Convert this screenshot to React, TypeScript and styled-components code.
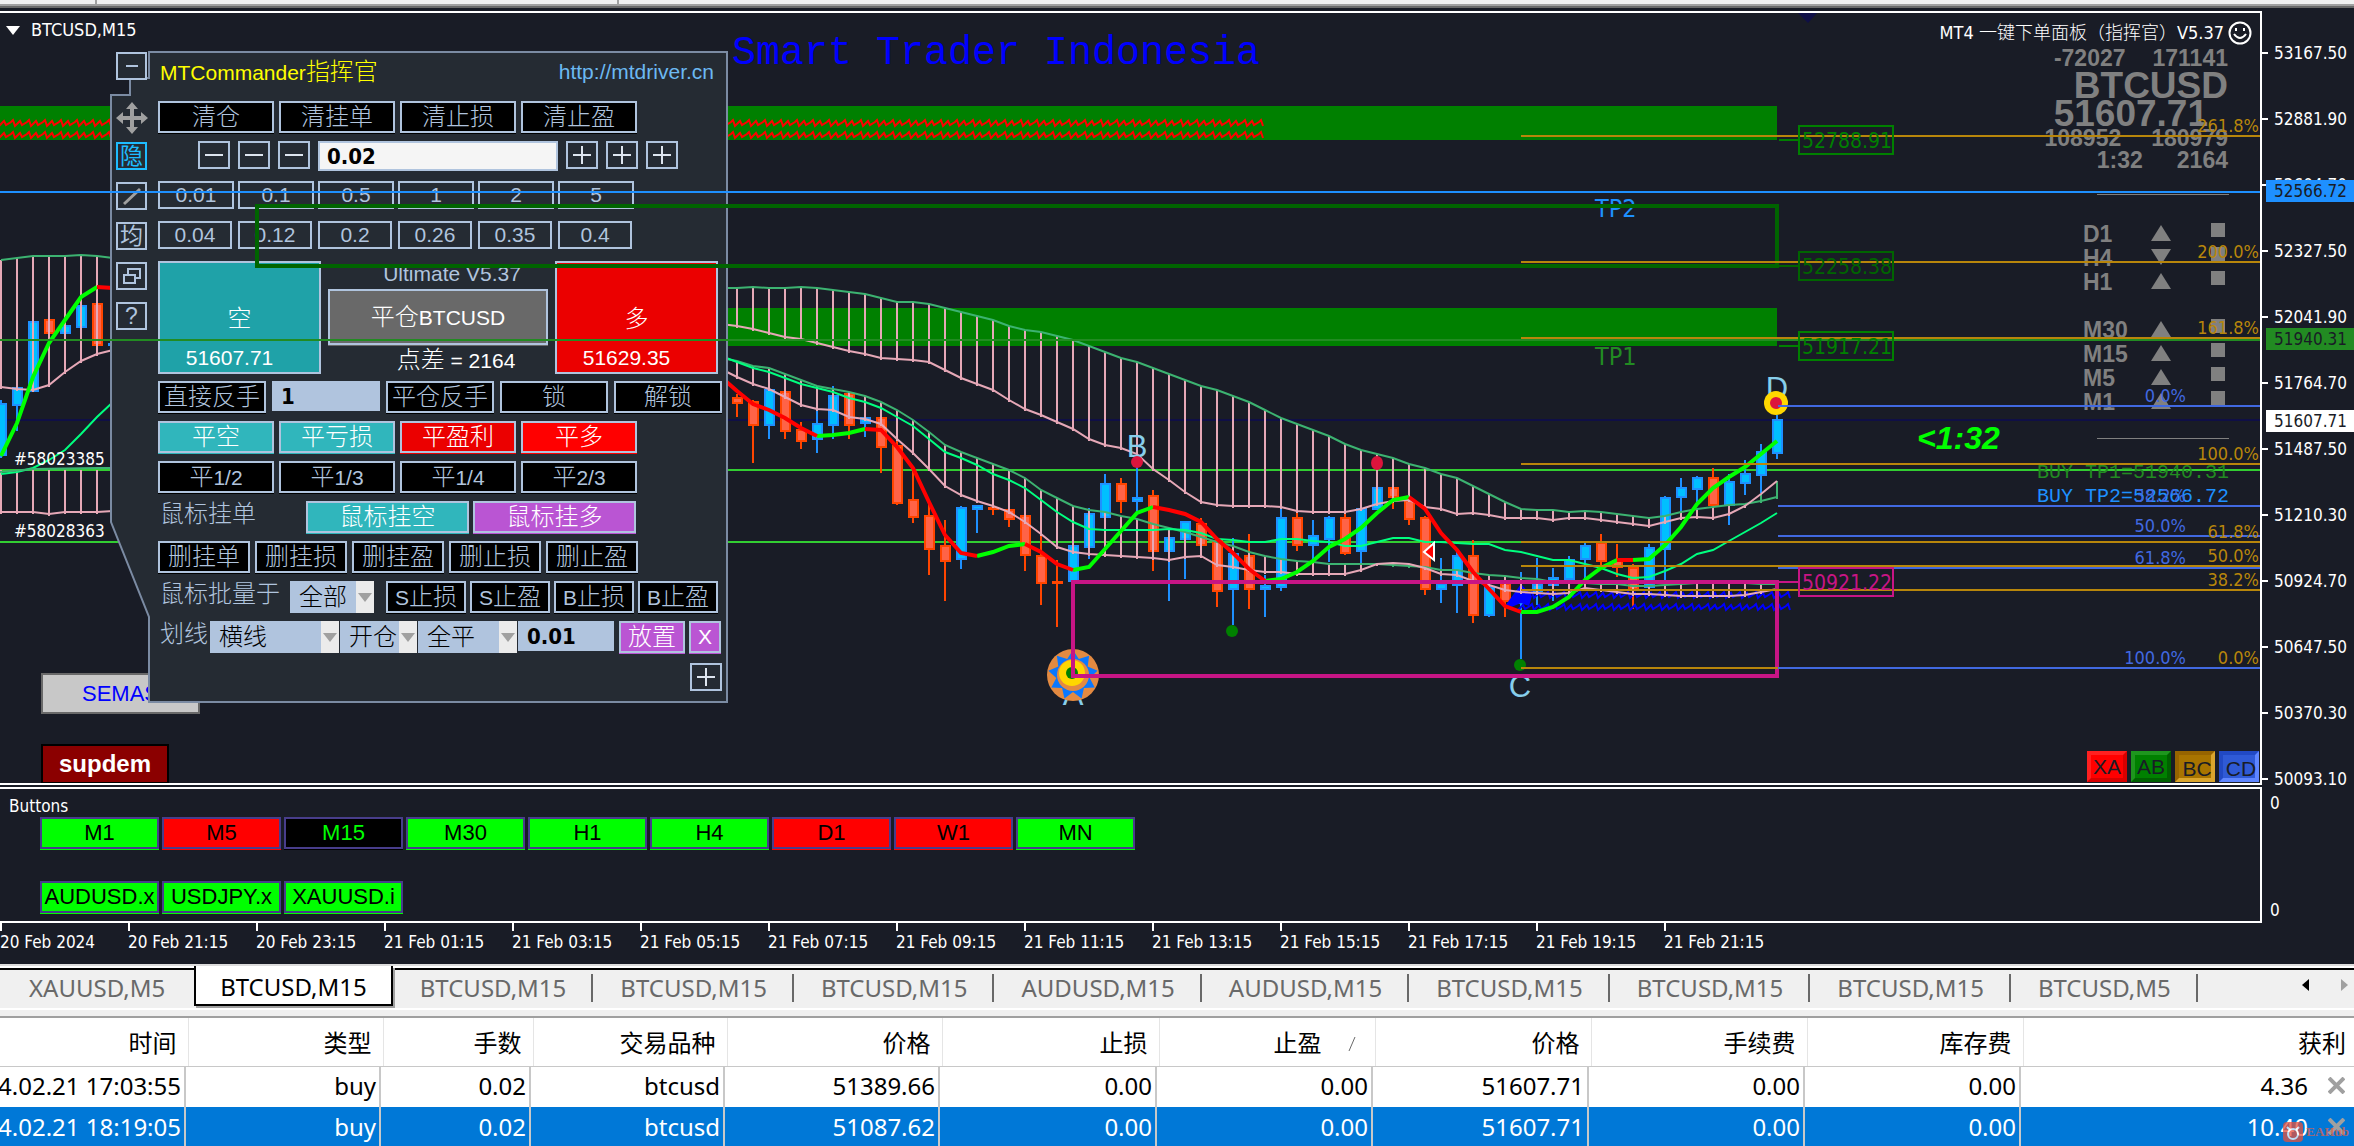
import React from 'react';
import styled, { createGlobalStyle, css } from 'styled-components';

const UI = `"DejaVu Sans Condensed", "Noto Sans", "Noto Sans CJK SC", sans-serif`;
const ARIAL = `"Liberation Sans", "Noto Sans CJK SC", sans-serif`;
const SEGOE = `"Noto Sans", "Noto Sans CJK SC", sans-serif`;
const MONO = `"Liberation Mono", monospace`;
const INK = '#191c26';
const STEEL = '#b0c4de';
const PANEL = '#252b33';
const TEAL = '#30b6bc';
const ORCHID = '#ba55d3';

const GlobalStyle = createGlobalStyle`
  * { box-sizing: border-box; }
  body { margin: 0; background: ${INK}; overflow: hidden; }
  button, input, select { font: inherit; color: inherit; margin: 0; padding: 0; border-radius: 0; outline: none; }
`;

/* ---------- page ---------- */

const Page = styled.div`
  height: 100vh;
  display: grid;
  grid-template-rows: 8px minmax(0, 1fr) auto auto;
  font-family: ${UI};
  color: #fff;
`;

const TopStrip = styled.div`
  display: flex;
  background: #f0f0f0;
  border-bottom: 2px solid #696969;
  box-shadow: inset 0 -2px #a0a0a0;
`;
const StripPart = styled.span<{ $w: number }>`
  width: ${(p) => p.$w}px;
  height: 4px;
  border-right: 2px solid #a0a0a0;
`;

const Terminal = styled.main`
  display: grid;
  grid-template-columns: minmax(0, 1fr) 92px;
  grid-template-rows: minmax(0, 1fr) 136px 39px;
  row-gap: 2px;
  padding-top: 3px;
  background: ${INK};
`;

const Plot = styled.section`
  position: relative;
  overflow: hidden;
  border: solid #fff;
  border-width: 2px 2px 2px 0;
`;

const Layer = styled.svg`
  position: absolute;
  inset: 0;
  width: 100%;
  height: 100%;
  pointer-events: none;
  overflow: hidden;
`;

/* ---------- price axis ---------- */

const Axis = styled.aside`
  position: relative;
  font-size: 17px;
`;
const AxisList = styled.ul`
  margin: 0;
  padding: 9px 0 0;
  list-style: none;
`;
const AxisItem = styled.li`
  height: 66px;
  display: flex;
  align-items: center;
  gap: 6px;
  &::before { content: ''; width: 6px; height: 2px; background: #fff; }
`;
const PriceTag = styled.div<{ $top: number; $bg: string }>`
  position: absolute;
  left: 4px;
  right: 0;
  top: ${(p) => p.$top}px;
  height: 22px;
  line-height: 22px;
  padding-left: 8px;
  color: ${INK};
  background: ${(p) => p.$bg};
`;
const SubAxis = styled.aside`
  display: flex;
  flex-direction: column;
  justify-content: space-between;
  padding: 5px 8px 2px;
  font-size: 17px;
  line-height: 22px;
`;

/* ---------- objects placed on the chart ---------- */

const ChartTitle = styled.div`
  position: absolute;
  left: 6px;
  top: 5px;
  display: flex;
  align-items: center;
  gap: 11px;
  font-size: 18px;
  line-height: 24px;
`;
const ExpertName = styled.div`
  position: absolute;
  right: 8px;
  top: 8px;
  display: flex;
  align-items: center;
  gap: 4px;
  font: 300 18px/24px "DejaVu Sans Condensed", "Noto Sans CJK SC", sans-serif;
`;
const Readout = styled.div`
  position: absolute;
  right: 31px;
  top: 31px;
  width: 185px;
  display: flex;
  flex-direction: column;
  align-items: flex-end;
  padding-right: 1px;
  color: #808080;
  font: bold 23px/24px ${ARIAL};
`;
const ReadRow = styled.div<{ $gap: number; $lh: number }>`
  display: flex;
  gap: ${(p) => p.$gap}px;
  line-height: ${(p) => p.$lh}px;
`;
const BigRead = styled.div<{ $inset?: boolean }>`
  font-size: 37px;
  line-height: 28px;
  padding-right: ${(p) => (p.$inset ? 20 : 0)}px;
`;
const Trend = styled.div`
  position: absolute;
  right: 31px;
  top: 181px;
  width: 132px;
  height: 245px;
  border: solid #808080;
  border-width: 1px 0;
`;
const TrendTable = styled.ul`
  list-style: none;
  margin: 27px 0 0 -14px;
  padding: 0;
  color: #808080;
  font: bold 23px/24px ${ARIAL};
`;
const TrendRow = styled.li<{ $spaced?: boolean }>`
  display: grid;
  grid-template-columns: 68px 60px 14px;
  height: 24px;
  margin-top: ${(p) => (p.$spaced ? 24 : 0)}px;
  svg { margin-top: 3px; }
`;
const Square = styled.i`
  width: 14px;
  height: 14px;
  margin-top: 1px;
  background: #808080;
`;

const SemaButton = styled.button`
  position: absolute;
  left: 41px;
  top: 660px;
  width: 159px;
  height: 41px;
  background: #c8c8c8;
  border: 2px solid #696969;
  color: #00f;
  font: 22px ${ARIAL};
`;
const SupdemButton = styled.button`
  position: absolute;
  left: 41px;
  top: 731px;
  width: 128px;
  height: 40px;
  background: #8b0000;
  border: 2px solid #000;
  color: #fff;
  font: bold 24px ${ARIAL};
`;

const LegButtons = styled.div`
  position: absolute;
  right: 1px;
  bottom: 1px;
  display: flex;
  gap: 4px;
`;
const LegButton = styled.button<{ $bg: string; $lt: string; $dk: string; $down?: boolean }>`
  width: 40px;
  height: 31px;
  border: 4px solid;
  border-color: ${(p) => `${p.$lt} ${p.$dk} ${p.$dk} ${p.$lt}`};
  background: ${(p) => p.$bg};
  color: ${INK};
  font: 21px/23px ${ARIAL};
  display: flex;
  justify-content: center;
  padding: ${(p) => (p.$down ? '2px 0 0 4px' : '0')};
`;

/* ---------- trade panel ---------- */

const Panel = styled.div`
  position: absolute;
  left: 110px;
  top: 38px;
  width: 618px;
  height: 653px;
  display: grid;
  grid-template-columns: 48px 1fr;
  color: ${STEEL};
  font: 21px/24px ${ARIAL};
`;
const PanelShape = styled.svg`
  position: absolute;
  inset: 0;
`;
const Tools = styled.div`
  position: relative;
  display: flex;
  flex-direction: column;
  align-items: flex-start;
  gap: 12px;
  padding: 1px 0 0 6px;
`;
const Tool = styled.button<{ $bare?: boolean; $hot?: boolean }>`
  width: 31px;
  height: 28px;
  display: grid;
  place-items: center;
  background: ${PANEL};
  border: 2px solid ${STEEL};
  font-size: 23px;
  line-height: 22px;
  ${(p) => p.$hot && css`border-color: #1ebcff; color: #1ebcff;`}
  ${(p) => p.$bare && css`margin-top: 10px; border: 0; background: none;`}
`;
const Body = styled.div`
  position: relative;
  display: flex;
  flex-direction: column;
  gap: 8px;
  padding: 9px 6px 0 0;
`;
const Head = styled.div`
  display: flex;
  justify-content: space-between;
  height: 33px;
  padding: 0 8px 0 2px;
  color: #ff0;
  a { color: #6cb9f2; text-decoration: none; }
`;
const Row = styled.div<{ $gap?: number; $pad?: number }>`
  display: flex;
  align-items: flex-start;
  gap: ${(p) => p.$gap ?? 5}px;
  height: 32px;
  padding-left: ${(p) => p.$pad ?? 0}px;
`;
const LastRow = styled(Row)`
  justify-content: flex-end;
  padding-top: 2px;
`;
const Btn = styled.button<{ $w: number; $bg?: string; $fg?: string; $low?: boolean }>`
  width: ${(p) => p.$w}px;
  height: ${(p) => (p.$low ? 28 : 32)}px;
  flex: none;
  display: flex;
  align-items: center;
  justify-content: center;
  white-space: nowrap;
  border: 2px solid ${STEEL};
  background: ${(p) => p.$bg ?? '#000'};
  color: ${(p) => p.$fg ?? STEEL};
  box-shadow: 0 1px ${(p) => p.$bg ?? '#000'};
`;
const Han = styled.span`
  font-size: 24px;
  font-weight: 300;
  line-height: 24px;
`;
const Field = styled.input<{ $w: number; $bg?: string }>`
  width: ${(p) => p.$w}px;
  height: 30px;
  flex: none;
  border: 2px solid ${STEEL};
  background: ${(p) => p.$bg ?? STEEL};
  color: #000;
  padding-left: 7px;
  font: bold 22px "DejaVu Sans Condensed", sans-serif;
`;
const RowLabel = styled.span<{ $w: number }>`
  width: ${(p) => p.$w}px;
  flex: none;
  padding-left: 2px;
  font-size: 24px;
  font-weight: 300;
  line-height: 26px;
  white-space: nowrap;
`;
const Pick = styled.span<{ $w: number }>`
  position: relative;
  width: ${(p) => p.$w}px;
  height: 32px;
  flex: none;
  background: ${STEEL};
  color: #000;
  select {
    appearance: none;
    width: 100%;
    height: 32px;
    padding-left: 9px;
    border: 0;
    background: none;
    font-size: 24px;
    font-weight: 300;
  }
  svg { position: absolute; right: 0; top: 0; pointer-events: none; }
`;
const Quotes = styled.div`
  display: grid;
  grid-template-columns: 163px 220px 163px;
  justify-content: space-between;
  height: 112px;
  padding-right: 4px;
`;
const Quote = styled.button<{ $bg: string }>`
  display: flex;
  flex-direction: column;
  align-items: center;
  justify-content: flex-end;
  gap: 15px;
  padding-bottom: 2px;
  border: 2px solid ${STEEL};
  background: ${(p) => p.$bg};
  color: #fff;
  line-height: 24px;
  span:last-child { padding-right: 20px; }
`;
const Middle = styled.div`
  display: flex;
  flex-direction: column;
  align-items: center;
  color: #fff;
  button { height: 56px; margin: 2px 0 3px; }
`;
const Note = styled.span<{ $dim?: boolean }>`
  padding-left: ${(p) => (p.$dim ? 28 : 36)}px;
  color: ${(p) => (p.$dim ? STEEL : '#fff')};
  line-height: 26px;
`;

/* ---------- button window and dates ---------- */

const SubWindow = styled.section`
  border: solid #fff;
  border-width: 2px 2px 2px 0;
  padding: 6px 0 0 9px;
  font-size: 17px;
  line-height: 22px;
`;
const KeyRow = styled.div`
  display: flex;
  gap: 3px;
  margin: 0 0 32px 31px;
`;
const Key = styled.button<{ $bg: string }>`
  width: 119px;
  height: 32px;
  border: 2px solid #483d8b;
  box-shadow: 0 1px ${(p) => p.$bg};
  background: ${(p) => p.$bg};
  color: ${(p) => (p.$bg === '#000' ? '#0f0' : '#000')};
  font: 22px ${ARIAL};
  white-space: nowrap;
`;
const Dates = styled.ol`
  grid-column: 1 / -1;
  display: flex;
  list-style: none;
  margin: -2px 0 0;
  padding: 0;
  overflow: hidden;
  font-size: 17px;
  line-height: 22px;
`;
const DateMark = styled.li`
  width: 128px;
  flex: none;
  white-space: nowrap;
  &::before { content: ''; display: block; width: 2px; height: 8px; background: #fff; }
`;

/* ---------- chart tabs ---------- */

const TabBar = styled.nav`
  display: flex;
  height: 54px;
  border: solid;
  border-width: 2px 0;
  border-color: #dcdcdc transparent #a0a0a0;
  background: linear-gradient(#fff 2px, #000 2px 4px, #f0f0f0 4px 42px, #fff 42px 44px, #f0f0f0 44px) padding-box;
  color: #696969;
  font: 24px/36px ${SEGOE};
`;
const Tab = styled.button<{ $on?: boolean; $first?: boolean }>`
  position: relative;
  height: 40px;
  padding: 0 ${(p) => (p.$first ? 29 : 27)}px;
  margin-top: 2px;
  border: 0;
  background: none;
  ${(p) => !p.$on && css`
    &::after { content: ''; position: absolute; right: 0; top: 6px; width: 2px; height: 28px; background: ${p.$first ? 'transparent' : '#696969'}; }
  `}
  ${(p) => p.$on && css`
    margin-top: 0;
    padding: 3px 24px 0;
    background: #fff;
    color: #000;
    border: solid #000;
    border-width: 0 2px 2px;
    box-shadow: 2px 2px #a0a0a0;
  `}
`;
const TabScroll = styled.div`
  margin-left: auto;
  display: flex;
  align-items: center;
  gap: 32px;
  padding: 0 6px 12px 0;
  button { border: 0; background: none; line-height: 0; }
`;

/* ---------- order table ---------- */

const Orders = styled.section`
  position: relative;
  height: 128px;
  overflow: hidden;
  background: #fff;
  color: #000;
  font: 24px/30px ${SEGOE};
`;
const Table = styled.table`
  width: 100%;
  table-layout: fixed;
  border-collapse: collapse;
  th, td { text-align: right; white-space: nowrap; }
  th {
    height: 48px;
    padding: 0 11px 0 0;
    font-weight: 400;
    border-right: 1px solid #e5e5e5;
    border-bottom: 1px solid #c8c8c8;
    font-family: "Noto Sans CJK SC", sans-serif;
  }
  td {
    height: 41px;
    padding: 0 7px 2px 0;
    background: linear-gradient(#c8c8c8, #c8c8c8) right 2px top / 2px 100% no-repeat;
  }
  th:last-child { border-right: 0; padding-right: 8px; }
  td:last-child { background: none; padding-right: 9px; }
`;
const OrderRow = styled.tr<{ $on?: boolean }>`
  ${(p) => p.$on && css`background: #0078d7; color: #fff;`}
`;
const Stamp = styled.span`
  float: right;
`;
const Gain = styled.span`
  display: flex;
  align-items: center;
  justify-content: flex-end;
  gap: 20px;
  button { border: 0; background: none; line-height: 0; }
`;
const SortMark = styled.span`
  display: inline-block;
  width: 42px;
  padding-right: 8px;
`;
const Watermark = styled.div`
  position: absolute;
  right: 5px;
  bottom: 4px;
  display: flex;
  align-items: center;
  gap: 3px;
  color: #e0604a;
  opacity: 0.75;
  font: bold 13px/20px "Liberation Serif", serif;
`;

/* ---------- chart data ---------- */

type Candle = [0 | 1, number, number, number, number];
const X0 = 737;
const STEP = 16;

// direction, high, body top, body bottom, low
const candles: Candle[] = [
  [0, 394, 397, 404, 417], [0, 400, 401, 426, 463], [1, 389, 389, 426, 439], [0, 391, 391, 432, 439],
  [0, 422, 429, 442, 449], [1, 411, 423, 440, 453], [1, 386, 395, 426, 439], [0, 392, 393, 426, 439],
  [1, 415, 417, 424, 437], [0, 415, 417, 448, 473], [0, 441, 445, 504, 505], [0, 468, 499, 518, 523],
  [0, 503, 515, 550, 575], [0, 520, 545, 562, 601], [1, 506, 507, 560, 569], [1, 505, 505, 510, 533],
  [0, 506, 507, 510, 515], [0, 509, 509, 520, 527], [0, 514, 515, 556, 571], [0, 535, 555, 584, 605],
  [0, 560, 581, 584, 627], [1, 543, 545, 582, 582], [1, 508, 513, 548, 559], [1, 474, 483, 518, 518],
  [0, 478, 483, 502, 513], [1, 467, 497, 502, 512], [0, 490, 495, 552, 571], [1, 530, 537, 552, 601],
  [1, 521, 521, 540, 579], [0, 518, 523, 546, 546], [0, 538, 540, 592, 607], [1, 538, 553, 590, 625],
  [0, 534, 555, 590, 609], [1, 575, 585, 590, 617], [1, 507, 517, 588, 591], [0, 513, 517, 546, 551],
  [1, 520, 535, 546, 561], [1, 516, 517, 540, 562], [0, 514, 517, 554, 555], [1, 507, 508, 552, 563],
  [1, 487, 487, 510, 510], [0, 487, 487, 498, 509], [0, 495, 500, 520, 525], [0, 516, 517, 590, 595],
  [1, 558, 583, 590, 603], [1, 550, 555, 586, 613], [0, 540, 555, 616, 623], [1, 585, 586, 616, 617],
  [0, 582, 583, 602, 617], [1, 572, 590, 604, 659], [1, 558, 584, 592, 605], [1, 568, 577, 586, 601],
  [1, 556, 559, 580, 580], [1, 543, 545, 560, 580], [0, 534, 542, 562, 565], [0, 544, 560, 568, 577],
  [0, 564, 567, 590, 609], [1, 544, 547, 588, 588], [1, 496, 497, 550, 590], [1, 478, 487, 498, 512],
  [1, 476, 477, 490, 505], [0, 468, 477, 506, 506], [1, 474, 481, 506, 525], [1, 460, 473, 484, 495],
  [1, 444, 451, 476, 493], [1, 415, 419, 454, 459],
];
const leftCandles: Candle[] = [
  [1, 400, 403, 456, 458], [1, 386, 387, 406, 431], [1, 321, 321, 392, 392], [0, 319, 319, 334, 334],
  [1, 325, 325, 334, 334], [1, 305, 305, 328, 328], [0, 303, 303, 346, 346], [1, 343, 343, 346, 346],
];

const upper = [288, 287, 288, 288, 287, 288, 290, 292, 294, 298, 302, 302, 304, 308, 312, 316, 320, 326, 330, 332, 336, 340, 346, 352, 358, 362, 368, 374, 380, 386, 390, 396, 402, 410, 418, 424, 430, 436, 444, 450, 454, 458, 464, 468, 474, 478, 486, 494, 502, 509, 510, 510, 512, 511, 512, 514, 516, 518, 516, 512, 509, 507, 505, 504, 501, 497];
const upperPink = [326, 329, 333, 337, 339, 343, 347, 351, 354, 358, 359, 360, 362, 370, 378, 384, 390, 400, 409, 415, 422, 429, 439, 445, 448, 454, 469, 480, 492, 502, 505, 506, 506, 506, 507, 511, 512, 512, 512, 509, 504, 501, 500, 507, 509, 514, 513, 515, 518, 518, 518, 520, 518, 518, 520, 522, 524, 526, 522, 518, 517, 518, 514, 506, 494, 481];
const lower = [361, 366, 368, 374, 380, 386, 389, 392, 396, 402, 410, 420, 432, 445, 452, 458, 464, 470, 478, 490, 498, 506, 510, 512, 516, 519, 524, 528, 532, 537, 542, 546, 552, 556, 559, 561, 562, 564, 564, 564, 564, 565, 566, 567, 570, 570, 573, 575, 576, 578, 579, 582, 583, 583, 584, 584, 586, 586, 585, 584, 583, 582, 583, 583, 584, 584];
const lowerPink = [377, 384, 389, 397, 405, 409, 410, 417, 419, 424, 439, 453, 469, 486, 495, 501, 506, 512, 522, 534, 547, 552, 554, 555, 556, 557, 558, 560, 557, 556, 565, 567, 570, 572, 572, 574, 574, 574, 574, 570, 564, 563, 564, 568, 574, 575, 581, 585, 590, 592, 593, 594, 593, 588, 590, 592, 594, 594, 595, 596, 596, 596, 596, 595, 592, 589];
const middle = [362, 368, 372, 378, 384, 388, 392, 398, 402, 408, 417, 426, 439, 452, 458, 465, 474, 480, 488, 500, 512, 522, 529, 530, 530, 530, 530, 529, 530, 533, 539, 540, 542, 542, 539, 539, 541, 542, 546, 546, 542, 538, 538, 542, 542, 543, 544, 544, 550, 552, 556, 560, 560, 564, 568, 574, 578, 577, 571, 564, 554, 550, 541, 532, 523, 513];
const average = [391, 404, 410, 418, 428, 436, 435, 433, 429, 430, 447, 468, 502, 535, 553, 556, 552, 546, 544, 552, 564, 570, 567, 549, 531, 513, 507, 510, 514, 522, 539, 553, 569, 581, 579, 572, 561, 547, 539, 528, 513, 500, 497, 509, 533, 550, 572, 589, 606, 612, 612, 607, 597, 580, 568, 560, 560, 559, 545, 527, 504, 488, 477, 467, 454, 441];
// index ranges where the moving average falls and rises
const falling: [number, number][] = [[-1, 5], [8, 15], [18, 21], [26, 33], [42, 49], [55, 56]];
const rising: [number, number][] = [[5, 8], [15, 18], [21, 26], [33, 42], [49, 55], [56, 65]];

const toPoints = (ys: number[], start: number, from = 0) => ys.map((y, i) => `${start + (from + i) * STEP},${y}`).join(' ');
const lead = (y: number, ys: number[]) => `721,${y} ${toPoints(ys, X0)}`;
const range = (ys: number[], a: number, b: number) =>
  (a < 0 ? '721,377 ' : '') + toPoints(ys.slice(Math.max(a, 0), b + 1), X0, Math.max(a, 0));
const zigzag = (x: number, y: number, n: number) => `M${x} ${y}` + 'l5-5l2 4l5-3l2-2l2 6'.repeat(n);

const leftUpper = [260, 258, 256, 256, 256, 255, 256, 258];
const leftPink = [387, 389, 390, 385, 372, 361, 354, 350];
const leftMid = [474, 472, 468, 460, 450, 434, 417, 402];
const leftBottom = [512, 512, 512, 514, 512, 512, 512, 511];

const golds: [number, string][] = [[136, '261.8%'], [262, '200.0%'], [338, '161.8%'], [464, '100.0%'], [542, '61.8%'], [566, '50.0%'], [590, '38.2%'], [668, '0.0%']];
const blues: [number, string][] = [[406, '0.0%'], [506, '38.2%'], [536, '50.0%'], [568, '61.8%'], [668, '100.0%']];
const boxes: [number, string, string][] = [[140, '52788.91', '#008000'], [266, '52258.38', '#006400'], [346, '51917.21', '#008000'], [582, '50921.22', '#c71585']];

const Candles = ({ data, start }: { data: Candle[]; start: number }) => (
  <>
    {data.map(([up, h, t, b, l], i) => {
      const x = start + i * STEP;
      const edge = up ? '#1e90ff' : '#ff4500';
      return (
        <g key={i}>
          <rect x={x - 1} y={h} width={2} height={l - h} fill={edge} />
          <rect x={x - 5} y={t} width={11} height={b - t} fill={edge} />
          {b - t > 4 && <rect x={x - 3} y={t + 2} width={7} height={b - t - 4} fill={up ? '#00bfff' : '#ff6347'} />}
        </g>
      );
    })}
  </>
);

const Bars = ({ a, b, start }: { a: number[]; b: number[]; start: number }) => (
  <>
    {a.map((y, i) => (
      <rect key={i} x={start + i * STEP - 1} y={Math.min(y, b[i])} width={2} height={Math.abs(b[i] - y) + 2}
        fill={b[i] < y ? '#3cb371' : '#e6a8b7'} />
    ))}
  </>
);

const sunStar = Array.from({ length: 18 }, (_, k) => {
  const r = k % 2 ? 17 : 25;
  const a = (k * Math.PI) / 9 - Math.PI / 2;
  return `${(1073 + r * Math.cos(a)).toFixed(1)},${(675 + r * Math.sin(a)).toFixed(1)}`;
}).join(' ');

const ChartLayer = () => (
  <Layer fontFamily={UI}>
    <g transform="translate(0 -13)">
      <rect x={0} y={106} width={1777} height={34} fill="#008000" />
      <rect x={257} y={308} width={1520} height={38} fill="#008000" />
      <g fill="none" stroke="#f00" strokeWidth={2}>
        <path d={zigzag(-1, 126, 79)} />
        <path d={zigzag(-1, 138, 79)} />
      </g>
      <line x1={0} x2="100%" y1={420} y2={420} stroke="#0f0f46" strokeWidth={2} />
      <path d="M1798 13h19l-9 10z" fill="#0f0f46" />
      <g stroke="#32cd32" strokeWidth={2}>
        <line x1={0} x2="100%" y1={470} y2={470} />
        <line x1={0} x2="100%" y1={542} y2={542} />
      </g>
      <Candles data={candles} start={X0} />
      <Candles data={leftCandles} start={1} />
      <path d="M1521 584l-16 22 4 2 12-5 8 3 3-10z" fill="#00f" />
      <g fill="none" stroke="#00f" strokeWidth={2}>
        <path d={zigzag(1518, 598, 17)} />
        <path d={zigzag(1518, 610, 17)} />
      </g>
      <Bars a={upper} b={upperPink} start={X0} />
      <Bars a={lower} b={lowerPink} start={X0} />
      <Bars a={leftUpper} b={leftPink} start={1} />
      <Bars a={leftBottom.map(() => 470)} b={leftBottom} start={1} />
      <g fill="none" strokeWidth={2}>
        <polyline points={lead(288, upper)} stroke="#3cb371" />
        <polyline points={lead(324, upperPink)} stroke="#e6a8b7" />
        <polyline points={lead(358, lower)} stroke="#3cb371" />
        <polyline points={lead(369, lowerPink)} stroke="#e6a8b7" />
        <polyline points={lead(356, middle)} stroke="#00ff7f" />
        <polyline points={toPoints(leftUpper, 1)} stroke="#3cb371" />
        <polyline points={toPoints(leftPink, 1)} stroke="#e6a8b7" />
        <polyline points={toPoints(leftBottom, 1)} stroke="#e6a8b7" />
        <polyline points={toPoints(leftMid, 1)} stroke="#00ff7f" />
        <path d="M0 472L33 469L97 468L113 468" stroke="#3cb371" />
      </g>
      <g fill="none" strokeWidth={4}>
        {rising.map(([a, b]) => <polyline key={a} points={range(average, a, b)} stroke="#0f0" />)}
        {falling.map(([a, b]) => <polyline key={a} points={range(average, a, b)} stroke="#f00" />)}
        <polyline points="1,456 17,423 33,377 49,343 65,320 81,297 97,287" stroke="#0f0" />
        <polyline points="97,287 113,288" stroke="#f00" />
      </g>
      <g fill="#87ceeb" fontFamily={ARIAL} fontSize={31} textAnchor="middle">
        <text x={1137} y={457}>B</text>
        <text x={1777} y={399}>D</text>
        <text x={1073} y={705}>A</text>
        <text x={1520} y={697}>C</text>
      </g>
      <ellipse cx={1137} cy={462} rx={6} ry={6} fill="#dc143c" />
      <ellipse cx={1377} cy={463} rx={6} ry={7} fill="#dc143c" />
      <ellipse cx={1232} cy={631} rx={6} ry={6} fill="#008000" />
      <ellipse cx={1520} cy={665} rx={6} ry={6} fill="#008000" />
      <circle cx={1776} cy={403} r={12} fill="#ffd700" />
      <circle cx={1776} cy={403} r={6} fill="#dc143c" />
      <path d="M1434 543v17l-10-8z" fill="#f00" stroke="#fff" strokeWidth={2} />
      <circle cx={1073} cy={675} r={26} fill="#e38a41" />
      <polygon points={sunStar} fill="#0a78ff" />
      <circle cx={1073} cy={675} r={16} fill="#e38a41" />
      <circle cx={1072} cy={673} r={13} fill="#ffd700" />
      <circle cx={1072} cy={673} r={6} fill="#008000" />
      <rect x={1073} y={582} width={704} height={94} fill="none" stroke="#c71585" strokeWidth={4} />
      <text x={14} y={465} fill="#fff" fontSize={17}>#58023385</text>
      <text x={14} y={537} fill="#fff" fontSize={17}>#58028363</text>
      <text x={732} y={64} fill="#00f" fontFamily={MONO} fontSize={40}>Smart Trader Indonesia</text>
      <text x={1595} y={217} fill="#1e90ff" fontSize={25}>TP2</text>
      <text x={1595} y={365} fill="#228b22" fontSize={25}>TP1</text>
    </g>
  </Layer>
);

const LevelLayer = () => (
  <Layer fontFamily={UI}>
    <g transform="translate(0 -13)">
      <rect x={257} y={206} width={1520} height={60} fill="none" stroke="#006400" strokeWidth={4} />
      <line x1={0} x2="100%" y1={192} y2={192} stroke="#1e90ff" strokeWidth={2} />
      <g strokeWidth={2}>
        {golds.map(([y]) => <line key={y} x1={1521} x2="100%" y1={y} y2={y} stroke="#b8860b" />)}
        {blues.map(([y]) => <line key={y} x1={1778} x2="100%" y1={y} y2={y} stroke="#4169e1" />)}
        <line x1={0} x2="100%" y1={340} y2={340} stroke="#228b22" />
      </g>
      {boxes.map(([y, t, c]) => (
        <g key={t}>
          <path d={`M1779 ${y}h20m0-14h94v28h-94z`} fill="none" stroke={c} strokeWidth={2} />
          <text x={1802} y={y + 8} fill={c} fontSize={21}>{t}</text>
        </g>
      ))}
      <svg x="100%" overflow="visible">
        <text x={-343} y={449} fill="#0f0" fontFamily={ARIAL} fontSize={32} fontWeight="bold" fontStyle="italic">&lt;1:32</text>
        <g fontFamily={MONO} fontSize={20} textAnchor="end">
          <text x={-31} y={478} fill="#228b22">BUY TP1=51940.31</text>
          <text x={-31} y={502} fill="#1e90ff">BUY TP2=52566.72</text>
        </g>
        <g fontSize={18} textAnchor="end">
          {golds.map(([y, t]) => <text key={t} x={-1} y={y - 4} fill="#b8860b">{t}</text>)}
          {blues.map(([y, t]) => <text key={t} x={-74} y={y - 4} fill="#4169e1">{t}</text>)}
        </g>
      </svg>
    </g>
  </Layer>
);

/* ---------- panel parts ---------- */

const Mixed = ({ children }: { children: string }) => (
  <span>
    {children.split(/([\u4e00-\u9fff]+)/).filter(Boolean).map((part, i) =>
      /[\u4e00-\u9fff]/.test(part) ? <Han key={i}>{part}</Han> : part)}
  </span>
);

const PBtn = ({ children, ...rest }: { children: string; $w: number; $bg?: string; $fg?: string; $low?: boolean }) => (
  <Btn type="button" {...rest}><Mixed>{children}</Mixed></Btn>
);

const Sign = ({ plus }: { plus?: boolean }) => (
  <svg width={18} height={18} stroke="#dde4ee" strokeWidth={2}>
    <path d={plus ? 'M0 9h18M9 0v18' : 'M0 9h18'} />
  </svg>
);

const Choice = ({ w, label, value }: { w: number; label: string; value: string }) => (
  <Pick $w={w}>
    <select aria-label={label} defaultValue={value}><option>{value}</option></select>
    <svg width={18} height={32}>
      <rect width={18} height={32} fill="#ebebeb" />
      <path d="M2 12h14l-7 9z" fill="#a0a0a0" />
    </svg>
  </Pick>
);

const TradePanel = () => (
  <Panel>
    <PanelShape width={618} height={653} aria-hidden="true">
      <path d="M39 1H617V651H39V566L1 471V44H20V27H39Z" fill={PANEL} stroke="#7b8ba3" strokeWidth={2} />
    </PanelShape>
    <Tools>
      <Tool type="button" aria-label="收起"><svg width={12} height={12}><path d="M0 6h12" stroke={STEEL} strokeWidth={2} /></svg></Tool>
      <Tool type="button" $bare aria-label="移动">
        <svg width={32} height={32} fill="#a0a0a0" stroke="#a0a0a0">
          <path d="M16 4v24M4 16h24" strokeWidth={4} />
          <path d="M16 0l6 7H10zM16 32l6-7H10zM0 16l7-6v12zM32 16l-7-6v12z" stroke="none" />
        </svg>
      </Tool>
      <Tool type="button" $hot>隐</Tool>
      <Tool type="button" aria-label="画线"><svg width={22} height={20}><path d="M3 18L19 3" stroke="#a0a0a0" strokeWidth={3} /></svg></Tool>
      <Tool type="button">均</Tool>
      <Tool type="button" aria-label="窗口">
        <svg width={20} height={20} fill="none" stroke={STEEL} strokeWidth={2}><path d="M2 9h11v8H2zM6 9V3h12v9h-5" /></svg>
      </Tool>
      <Tool type="button">?</Tool>
    </Tools>
    <Body>
      <Head><Mixed>MTCommander指挥官</Mixed><a href="http://mtdriver.cn">http://mtdriver.cn</a></Head>
      <Row $gap={5}>
        {['清仓', '清挂单', '清止损', '清止盈'].map((t) => <PBtn key={t} $w={116}>{t}</PBtn>)}
      </Row>
      <Row $gap={8} $pad={40}>
        {[1, 2, 3].map((n) => <Btn key={n} type="button" $low $w={32} $bg={PANEL} aria-label={`减少 ${n}`}><Sign /></Btn>)}
        <Field aria-label="手数" $w={240} $bg="#f5f5f5" defaultValue="0.02" />
        {[1, 2, 3].map((n) => <Btn key={n} type="button" $low $w={32} $bg={PANEL} aria-label={`增加 ${n}`}><Sign plus /></Btn>)}
      </Row>
      <Row $gap={4}>
        {['0.01', '0.1', '0.5', '1', '2', '5'].map((t) => <PBtn key={t} $low $w={76} $bg={PANEL}>{t}</PBtn>)}
      </Row>
      <Row $gap={6}>
        {['0.04', '0.12', '0.2', '0.26', '0.35', '0.4'].map((t) => <PBtn key={t} $low $w={74} $bg={PANEL}>{t}</PBtn>)}
      </Row>
      <Quotes>
        <Quote type="button" $bg="#1fa2a8"><Han>空</Han><span>51607.71</span></Quote>
        <Middle>
          <Note $dim>Ultimate V5.37</Note>
          <PBtn $w={220} $bg="#696969" $fg="#fff">平仓BTCUSD</PBtn>
          <Note><Mixed>点差 = 2164</Mixed></Note>
        </Middle>
        <Quote type="button" $bg="#eb0000"><Han>多</Han><span>51629.35</span></Quote>
      </Quotes>
      <Row $gap={6}>
        <PBtn $w={108}>直接反手</PBtn>
        <Field aria-label="倍数" $w={108} defaultValue="1" />
        {['平仓反手', '锁', '解锁'].map((t) => <PBtn key={t} $w={108}>{t}</PBtn>)}
      </Row>
      <Row $gap={5}>
        <PBtn $w={116} $bg={TEAL} $fg="#fff">平空</PBtn>
        <PBtn $w={116} $bg={TEAL} $fg="#fff">平亏损</PBtn>
        <PBtn $w={116} $bg="#eb0000" $fg="#fff">平盈利</PBtn>
        <PBtn $w={116} $bg="#f00" $fg="#fff">平多</PBtn>
      </Row>
      <Row $gap={5}>
        {['平1/2', '平1/3', '平1/4', '平2/3'].map((t) => <PBtn key={t} $w={116}>{t}</PBtn>)}
      </Row>
      <Row $gap={4}>
        <RowLabel $w={144}>鼠标挂单</RowLabel>
        <PBtn $w={163} $bg={TEAL} $fg="#fff">鼠标挂空</PBtn>
        <PBtn $w={163} $bg={ORCHID} $fg="#fff">鼠标挂多</PBtn>
      </Row>
      <Row $gap={5}>
        {['删挂单', '删挂损', '删挂盈', '删止损', '删止盈'].map((t) => <PBtn key={t} $w={92}>{t}</PBtn>)}
      </Row>
      <Row $gap={4}>
        <RowLabel $w={128}>鼠标批量于</RowLabel>
        <Choice w={84} label="批量范围" value="全部" />
        <Row $gap={4} $pad={8}>
          {['S止损', 'S止盈', 'B止损', 'B止盈'].map((t) => <PBtn key={t} $w={80}>{t}</PBtn>)}
        </Row>
      </Row>
      <Row $gap={1}>
        <RowLabel $w={51}>划线</RowLabel>
        <Choice w={129} label="线型" value="横线" />
        <Choice w={77} label="动作" value="开仓" />
        <Choice w={99} label="范围" value="全平" />
        <Field aria-label="划线手数" $w={96} defaultValue="0.01" />
        <Row $gap={4} $pad={4}>
          <PBtn $w={66} $bg={ORCHID} $fg="#fff">放置</PBtn>
          <PBtn $w={32} $bg={ORCHID} $fg="#fff">X</PBtn>
        </Row>
      </Row>
      <LastRow>
        <Btn type="button" $low $w={32} $bg={PANEL} aria-label="展开"><Sign plus /></Btn>
      </LastRow>
    </Body>
  </Panel>
);

/* ---------- static lists ---------- */

const axisPrices = ['53167.50', '52881.90', '52604.70', '52327.50', '52041.90', '51764.70', '51487.50', '51210.30', '50924.70', '50647.50', '50370.30', '50093.10'];
const frames: [string, string][] = [['M1', '#0f0'], ['M5', '#f00'], ['M15', '#000'], ['M30', '#0f0'], ['H1', '#0f0'], ['H4', '#0f0'], ['D1', '#f00'], ['W1', '#f00'], ['MN', '#0f0']];
const dates = ['20 Feb 2024', '20 Feb 21:15', '20 Feb 23:15', '21 Feb 01:15', '21 Feb 03:15', '21 Feb 05:15', '21 Feb 07:15', '21 Feb 09:15', '21 Feb 11:15', '21 Feb 13:15', '21 Feb 15:15', '21 Feb 17:15', '21 Feb 19:15', '21 Feb 21:15'];
const tabs = ['XAUUSD,M5', 'BTCUSD,M15', 'BTCUSD,M15', 'BTCUSD,M15', 'BTCUSD,M15', 'AUDUSD,M15', 'AUDUSD,M15', 'BTCUSD,M15', 'BTCUSD,M15', 'BTCUSD,M15', 'BTCUSD,M5'];
const columns: [string, number | undefined][] = [['时间', 188], ['类型', 195], ['手数', 150], ['交易品种', 194], ['价格', 215], ['止损', 217], ['止盈', 216], ['价格', 216], ['手续费', 216], ['库存费', 216], ['获利', undefined]];
const orders = [
  ['4.02.21 17:03:55', 'buy', '0.02', 'btcusd', '51389.66', '0.00', '0.00', '51607.71', '0.00', '0.00', '4.36'],
  ['4.02.21 18:19:05', 'buy', '0.02', 'btcusd', '51087.62', '0.00', '0.00', '51607.71', '0.00', '0.00', '10.40'],
];
const trends: [string, boolean, boolean][] = [['D1', true, false], ['H4', false, false], ['H1', true, false], ['M30', true, true], ['M15', true, false], ['M5', true, false], ['M1', true, false]];

const Cell = ({ text, column }: { text: string; column: number }) => {
  if (column === 0) return <td><Stamp>{text}</Stamp></td>;
  if (column < 10) return <td>{text}</td>;
  return (
    <td>
      <Gain>
        {text}
        <button type="button" aria-label="平仓">
          <svg width={17} height={17}><path d="M1 1l15 15M16 1L1 16" stroke="#a0a0a0" strokeWidth={4} /></svg>
        </button>
      </Gain>
    </td>
  );
};

export default function App() {
  return (
    <Page>
      <GlobalStyle />
      <TopStrip><StripPart $w={97} /><StripPart $w={522} /></TopStrip>
      <Terminal>
        <Plot>
          <ChartLayer />
          <ChartTitle>
            <svg width={14} height={9}><path d="M0 0h14L7 9z" fill="#fff" /></svg>
            BTCUSD,M15
          </ChartTitle>
          <ExpertName>
            MT4 一键下单面板（指挥官）V5.37
            <svg width={24} height={24} fill="none" stroke="#fff" strokeWidth={2}>
              <circle cx={12} cy={12} r={10.5} />
              <path d="M6 13q6 8 12 0" />
              <path d="M8 7v3M16 7v3" />
            </svg>
          </ExpertName>
          <Readout>
            <ReadRow $gap={27} $lh={28}><span>-72027</span><span>171141</span></ReadRow>
            <BigRead>BTCUSD</BigRead>
            <BigRead $inset>51607.71</BigRead>
            <ReadRow $gap={30} $lh={20}><span>108952</span><span>180979</span></ReadRow>
            <ReadRow $gap={34} $lh={24}><span>1:32</span><span>2164</span></ReadRow>
          </Readout>
          <Trend>
            <TrendTable>
              {trends.map(([name, up, spaced]) => (
                <TrendRow key={name} $spaced={spaced}>
                  {name}
                  <svg width={20} height={16}><path d={up ? 'M0 16L10 0L20 16z' : 'M0 0h20L10 16z'} fill="#808080" /></svg>
                  <Square />
                </TrendRow>
              ))}
            </TrendTable>
          </Trend>
          <SemaButton type="button">SEMAS</SemaButton>
          <SupdemButton type="button">supdem</SupdemButton>
          <TradePanel />
          <LevelLayer />
          <LegButtons>
            <LegButton type="button" $bg="#f00" $lt="#ff2020" $dk="#d80000">XA</LegButton>
            <LegButton type="button" $bg="#008000" $lt="#1e961e" $dk="#006000">AB</LegButton>
            <LegButton type="button" $bg="#a87400" $lt="#966400" $dk="#daa52d" $down>BC</LegButton>
            <LegButton type="button" $bg="#2f5ad6" $lt="#2149c4" $dk="#5f86ff" $down>CD</LegButton>
          </LegButtons>
        </Plot>
        <Axis>
          <AxisList>{axisPrices.map((p) => <AxisItem key={p}>{p}</AxisItem>)}</AxisList>
          <PriceTag $top={169} $bg="#1e90ff">52566.72</PriceTag>
          <PriceTag $top={317} $bg="#228b22">51940.31</PriceTag>
          <PriceTag $top={399} $bg="#fff">51607.71</PriceTag>
        </Axis>
        <SubWindow>
          Buttons
          <KeyRow>{frames.map(([t, c]) => <Key key={t} type="button" $bg={c}>{t}</Key>)}</KeyRow>
          <KeyRow>{['AUDUSD.x', 'USDJPY.x', 'XAUUSD.i'].map((t) => <Key key={t} type="button" $bg="#0f0">{t}</Key>)}</KeyRow>
        </SubWindow>
        <SubAxis><span>0</span><span>0</span></SubAxis>
        <Dates>{dates.map((d) => <DateMark key={d}>{d}</DateMark>)}</Dates>
      </Terminal>
      <TabBar>
        {tabs.map((t, i) => <Tab key={i} type="button" $on={i === 1} $first={i === 0}>{t}</Tab>)}
        <TabScroll>
          <button type="button" aria-label="向左滚动"><svg width={7} height={12}><path d="M7 0v12L0 6z" fill="#000" /></svg></button>
          <button type="button" aria-label="向右滚动"><svg width={7} height={12}><path d="M0 0v12l7-6z" fill="#a0a0a0" /></svg></button>
        </TabScroll>
      </TabBar>
      <Orders>
        <Table>
          <colgroup>{columns.map(([, w], i) => <col key={i} width={w} />)}</colgroup>
          <thead>
            <tr>
              {columns.map(([name], i) => (
                <th key={i} scope="col">
                  {name}
                  {i === 6 && <SortMark><svg width={8} height={16}><path d="M1 15L7 1" stroke="#696969" /></svg></SortMark>}
                </th>
              ))}
            </tr>
          </thead>
          <tbody>
            {orders.map((cells, r) => (
              <OrderRow key={r} $on={r === 1}>
                {cells.map((c, i) => <Cell key={i} text={c} column={i} />)}
              </OrderRow>
            ))}
          </tbody>
        </Table>
        <Watermark>
          <svg width={20} height={20}>
            <rect width={20} height={20} rx={4} fill="#e8503c" />
            <circle cx={10} cy={12} r={5} fill="none" stroke="#fff" strokeWidth={2} />
            <path d="M4 5l3 3M16 5l-3 3" stroke="#fff" strokeWidth={2} />
          </svg>
          EAHub
        </Watermark>
      </Orders>
    </Page>
  );
}
